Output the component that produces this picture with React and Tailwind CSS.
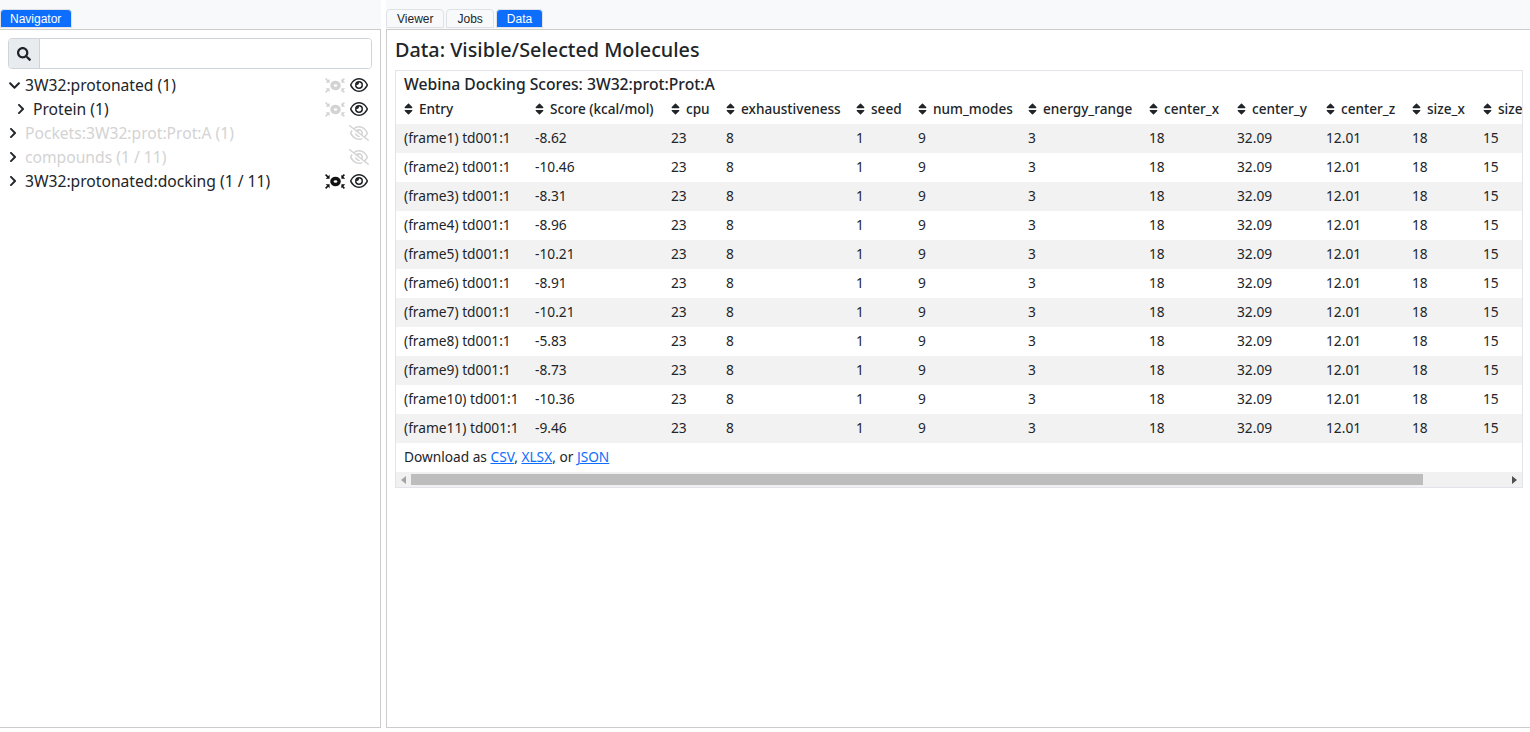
import React from 'react';
import { FaSearch, FaSort, FaChevronRight, FaChevronDown } from 'react-icons/fa';
import { FaRegEye, FaRegEyeSlash } from 'react-icons/fa6';

const font = "font-['Noto_Sans','Open_Sans',sans-serif]";

const columns = [
  { name: 'Entry', width: 'w-[131px]' },
  { name: 'Score (kcal/mol)', width: 'w-[136px]' },
  { name: 'cpu', width: 'w-[55px]' },
  { name: 'exhaustiveness', width: 'w-[130px]' },
  { name: 'seed', width: 'w-[62px]' },
  { name: 'num_modes', width: 'w-[110px]' },
  { name: 'energy_range', width: 'w-[121px]' },
  { name: 'center_x', width: 'w-[88px]' },
  { name: 'center_y', width: 'w-[89px]' },
  { name: 'center_z', width: 'w-[86px]' },
  { name: 'size_x', width: 'w-[71px]' },
  { name: 'size_y', width: 'w-[71px]' },
  { name: 'size_z', width: 'w-[75px]' },
];

const scores = ['-8.62', '-10.46', '-8.31', '-8.96', '-10.21', '-8.91', '-10.21', '-5.83', '-8.73', '-10.36', '-9.46'];

const rows = scores.map((score, i) => [
  `(frame${i + 1}) td001:1`, score, '23', '8', '1', '9', '3', '18', '32.09', '12.01', '18', '15', '15',
]);

const FocusIcon = ({ className }) => (
  <svg viewBox="0 0 20 15" className={className} fill="currentColor">
    <ellipse cx="10.5" cy="7.5" rx="3.6" ry="3" fill="none" stroke="currentColor" strokeWidth="3.4" />
    <path d="M4.6.8v4H.6zM16.4.8v4h4zM4.6 14.2v-4H.6zM16.4 14.2v-4h4z" />
    <path d="M.6.6 3 3M19.4.6 17 3M.6 14.4 3 12M19.4 14.4 17 12" fill="none" stroke="currentColor" strokeWidth="1.6" />
  </svg>
);

const TreeRow = ({ label, open, indent, muted, focus, eye }) => (
  <div className={`flex h-6 items-center pr-3 ${indent ? 'pl-4' : 'pl-2'}`}>
    {open
      ? <FaChevronDown className="w-[13px] h-[13px] mr-1 text-[#212529]" />
      : <FaChevronRight className="w-3 h-3 mr-[6px] -ml-px text-[#212529]" />}
    <span className={`text-[15.65px] leading-6 ${muted ? 'text-[#d3d3d3]' : 'text-[#212529]'}`}>{label}</span>
    <div className="ml-auto flex items-center">
      {focus && <FocusIcon className={`w-5 h-[15px] mr-[5px] ${focus === 'on' ? 'text-[#111]' : 'text-[#d3d3d3]'}`} />}
      {eye === 'on'
        ? <FaRegEye className="w-[18px] h-[18px] text-[#212529]" />
        : <FaRegEyeSlash className="w-5 h-[18px] -mr-px text-[#d3d3d3]" />}
    </div>
  </div>
);

const Tab = ({ label, active, className = '' }) => (
  <div className={`font-['Liberation_Sans',sans-serif] text-xs h-[19px] flex items-center border rounded-t-[4px] border-[#dee2e6] ${active ? 'bg-[#0d6efd] text-white' : 'bg-[#f8f9fa] text-[#212529]'} ${className}`}>
    {label}
  </div>
);

const ScrollBar = () => (
  <div className="h-[15px] bg-[#f1f1f1] flex items-center">
    <svg viewBox="0 0 5 8" className="w-[5px] h-2 ml-[5px] text-[#a3a3a3]" fill="currentColor"><path d="M5 0v8L0 4z" /></svg>
    <div className="w-[1012px] h-[11px] bg-[#bdbdbd] ml-[5px]" />
    <svg viewBox="0 0 5 8" className="w-[5px] h-2 ml-auto mr-[5px] text-[#505050]" fill="currentColor"><path d="M0 0v8l5-4z" /></svg>
  </div>
);

const App = () => {
  return (
    <div className={`${font} w-full h-[732px] flex bg-white text-[#212529] overflow-hidden`}>
      <div className="w-[381px] h-[728px] flex flex-col shrink-0">
        <div className="h-[30px] bg-[#f8f9fa] border-b border-[#ccc] flex items-end pb-px">
          <Tab label="Navigator" active className="pl-[9px] w-[72px]" />
        </div>
        <div className="flex-1 border-r border-b border-[#ccc] px-2 pt-2">
          <div className="flex h-[31px] border border-[#ced4da] rounded-[4px] overflow-hidden mb-1">
            <div className="w-[31px] bg-[#e9ecef] border-r border-[#ced4da] flex items-center justify-center">
              <FaSearch className="w-[14px] h-[14px] text-[#212529]" />
            </div>
            <input className="flex-1 min-w-0 bg-white outline-none" />
          </div>
          <div className="-mx-2">
            <TreeRow label="3W32:protonated (1)" open focus="off" eye="on" />
            <TreeRow label="Protein (1)" indent focus="off" eye="on" />
            <TreeRow label="Pockets:3W32:prot:Prot:A (1)" muted eye="off" />
            <TreeRow label="compounds (1 / 11)" muted eye="off" />
            <TreeRow label="3W32:protonated:docking (1 / 11)" focus="on" eye="on" />
          </div>
        </div>
      </div>

      <div className="flex-1 min-w-0 h-[728px] flex flex-col ml-[5px]">
        <div className="h-[30px] bg-[#f8f9fa] border-b border-[#ccc] flex items-end pb-px gap-[2px]">
          <Tab label="Viewer" className="px-[10px]" />
          <Tab label="Jobs" className="px-[10px]" />
          <Tab label="Data" active className="px-[10px] w-[47px]" />
        </div>
        <div className="flex-1 min-h-0 border-l border-b border-[#ccc] pl-2 pr-[7px]">
          <h1 className="text-[19.8px] font-medium leading-6 mt-2 mb-2">Data: Visible/Selected Molecules</h1>
          <div className="border border-[#e3e3ea]">
            <div className="overflow-hidden">
              <div className="w-[1224px]">
                <div className="text-[15.7px] font-medium leading-5 px-2 pt-[3px] pb-px">Webina Docking Scores: 3W32:prot:Prot:A</div>
                <table className="table-fixed w-[1224px] text-[13.75px] border-collapse">
                  <thead>
                    <tr className="h-[29px]">
                      {columns.map((col) => (
                        <th key={col.name} className={`${col.width} pl-2 pt-[2px] text-left text-[13.6px] font-medium whitespace-nowrap`}>
                          <span className="inline-flex items-center gap-[6px]">
                            <FaSort className="w-[9px] h-[14px] text-[#212529]" />
                            {col.name}
                          </span>
                        </th>
                      ))}
                    </tr>
                  </thead>
                  <tbody>
                    {rows.map((row, i) => (
                      <tr key={i} className={`h-[29px] ${i % 2 === 0 ? 'bg-[#f2f2f2]' : 'bg-white'}`}>
                        {row.map((cell, j) => (
                          <td key={j} className="pl-2 whitespace-nowrap">{cell}</td>
                        ))}
                      </tr>
                    ))}
                  </tbody>
                </table>
                <div className="text-[13.7px] h-[29px] flex items-center px-2">
                  <span>Download as <a href="#csv" className="text-[#0d6efd] underline">CSV</a>, <a href="#xlsx" className="text-[#0d6efd] underline">XLSX</a>, or <a href="#json" className="text-[#0d6efd] underline">JSON</a></span>
                </div>
              </div>
            </div>
            <ScrollBar />
          </div>
        </div>
      </div>
    </div>
  );
};

export default App;
